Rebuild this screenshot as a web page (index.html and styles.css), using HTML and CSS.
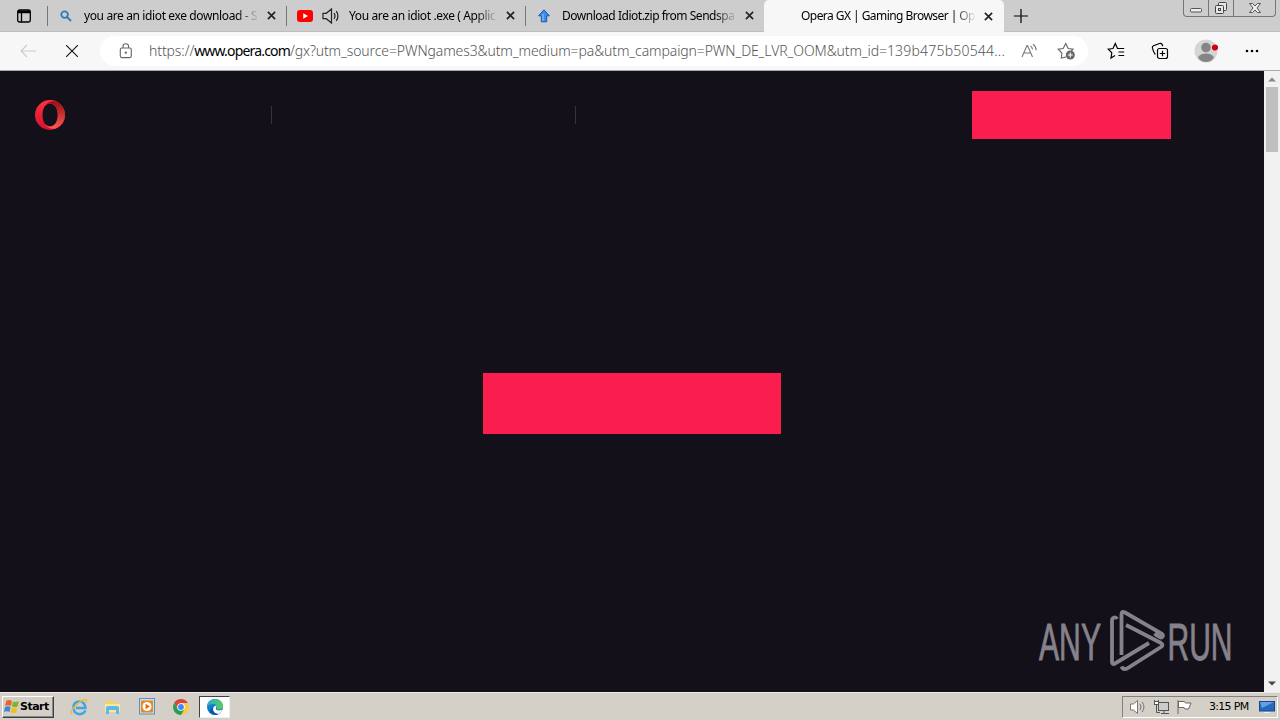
FILE: index.html
```html
<!DOCTYPE html>
<html lang="en">
<head>
  <meta charset="utf-8">
  <title>Opera GX | Gaming Browser | Opera</title>
  <link rel="stylesheet" href="styles.css">
</head>
<body>
<div class="tabs">
  <div class="tab-menu">
    <svg width="16" height="16" viewBox="0 0 16 16" fill="none" stroke="#000" stroke-width="1.3"><rect x="1.7" y="2" width="12.6" height="12" rx="1.8"/><path d="M2 3.2h12M2 4.5h12M5.5 4v10"/></svg>
  </div>
  <div class="tab">
    <svg class="icon" width="12" height="12" viewBox="0 0 12 12" fill="none" stroke="#3679b8" stroke-width="1.8"><circle cx="4.6" cy="4.6" r="3.3"/><path d="M7 7l4 4"/></svg>
    <span class="title t1">you are an idiot exe download - S</span>
    <svg class="close" viewBox="0 0 10 10"><path d="M1 1l8 8M9 1l-8 8"/></svg>
  </div>
  <div class="tab media">
    <svg class="icon" width="16" height="12" viewBox="0 0 16 12"><rect width="16" height="12" rx="3" fill="#f00"/><path d="M6.2 3.2v5.6L11 6z" fill="#fff"/></svg>
    <svg class="sound" width="18" height="16" viewBox="0 0 18 16" fill="none" stroke="#222" stroke-width="1.2"><path d="M1 5.3h3.2L9.5 1v14L4.2 10.7H1zM12 5.2q2 2.8 0 5.6M14.3 3.2q3.3 4.8 0 9.6"/></svg>
    <span class="title t2">You are an idiot .exe ( Applic</span>
    <svg class="close" viewBox="0 0 10 10"><path d="M1 1l8 8M9 1l-8 8"/></svg>
  </div>
  <div class="tab">
    <svg class="icon" width="12" height="14" viewBox="0 0 12 14"><path d="M6 .8l5.400 6H8.700v6H3.300v-6H.6z" fill="#3c8cec" stroke="#1858b0"/><path d="M5 5v7" stroke="#8cc8ff"/></svg>
    <span class="title t3">Download Idiot.zip from Sendspa</span>
    <svg class="close" viewBox="0 0 10 10"><path d="M1 1l8 8M9 1l-8 8"/></svg>
  </div>
  <div class="tab active">
    <span class="icon blank"></span>
    <span class="title t4">Opera GX | Gaming Browser | Op</span>
    <svg class="close" viewBox="0 0 10 10"><path d="M1 1l8 8M9 1l-8 8"/></svg>
  </div>
  <div class="new-tab">
    <svg width="14" height="14" viewBox="0 0 14 14" stroke="#000" stroke-width="1.2"><path d="M7 0v14M0 7h14"/></svg>
  </div>
  <div class="window-buttons">
    <div class="wb"><svg width="14" height="6" viewBox="0 0 14 6"><rect x="1.500" y="1.500" width="11" height="3.500" rx="1" fill="#eee" stroke="#555"/></svg></div>
    <div class="wb"><svg width="14" height="14" viewBox="0 0 14 14" fill="#e6e6e6" stroke="#444"><rect x="4.500" y="1.500" width="8" height="8" rx="1"/><rect x="1.500" y="4.500" width="8" height="8" rx="1"/><rect x="4.500" y="7.500" width="2" height="2"/></svg></div>
    <div class="wb wide"><svg width="14" height="12" viewBox="0 0 14 12"><path d="M1.500 1.500h3L7 4l2.500-2.500h3L9 6l3.500 4.500h-3L7 8l-2.500 2.500h-3L5 6z" fill="#eee" stroke="#555"/></svg></div>
  </div>
</div>

<div class="toolbar">
  <svg class="back" width="16" height="14" viewBox="0 0 16 14" fill="none" stroke="#ccc" stroke-width="1.2"><path d="M16 7H1M7 1L1 7l6 6"/></svg>
  <svg class="stop" width="12" height="12" viewBox="0 0 12 12" stroke="#111" stroke-width="1.1"><path d="M0 0l12 12M12 0L0 12"/></svg>
  <div class="address">
    <svg class="lock" width="14" height="16" viewBox="0 0 14 16" fill="none" stroke="#666" stroke-width="1.1"><rect x="1.300" y="5" width="11" height="9.600" rx="1.500"/><path d="M4 5V3.500q0-2.800 2.800-2.800t2.800 2.800V5"/><circle cx="6.800" cy="9.700" r=".6" fill="#666"/></svg>
    <div class="url"><span class="scheme">https://</span><span class="host">www.opera.com</span><span class="path">/gx?utm_source=PWNgames3&amp;utm_medium=pa&amp;utm_campaign=PWN_DE_LVR_OOM&amp;utm_id=</span><span class="id">139b475b50544...</span></div>
    <svg class="read" width="17" height="16" viewBox="0 0 17 16" fill="none" stroke="#777" stroke-width="1.1"><path d="M1 14L6 2.500h.5L11.500 14M2.800 10h7M9.500 3q2 1.200 2 3.500M12 1.300q3 2 3.200 6"/></svg>
    <svg class="fav" width="18" height="18" viewBox="0 0 18 18" fill="none" stroke="#666" stroke-width="1.1"><path d="M9 15l-4.700 1 .6-5L1.200 7.200l5-.7L8.700 1.500l2.500 5 5 .7-2 2"/><circle cx="13.300" cy="13" r="4.500" fill="#666" stroke="none"/><path d="M13.300 10.500v5M10.800 13h5" stroke="#fff"/></svg>
  </div>
  <svg class="favorites" width="18" height="18" viewBox="0 0 18 18" fill="none" stroke="#000" stroke-width="1.2"><path d="M8 13.500L4 16l.8-5.200L1.200 7.200l4.800-.7 2.300-5 2.200 5h6.700M11.500 10h5.700M11.500 13.500h5.700"/></svg>
  <svg class="collections" width="18" height="18" viewBox="0 0 18 18" fill="none" stroke="#000" stroke-width="1.2"><rect x="6.500" y="6.500" width="10" height="10" rx="2"/><path d="M11.500 8.800v5.400M8.800 11.500h5.400M4.300 12.500Q2.800 11 1.400 6.200 1 4.500 2.500 3.800L8.500 1.500q1.800-.5 2.700 1l.6 1.700"/></svg>
  <svg class="profile" width="24" height="24" viewBox="0 0 24 24"><circle cx="12" cy="12" r="11.500" fill="#d5d5d3"/><circle cx="12" cy="8.500" r="4.800" fill="#858585"/><path d="M4 18.500q2-4 8-4t8 4q-3 4.500-8 4.500t-8-4.500" fill="#858585"/><circle cx="21" cy="8.500" r="3.100" fill="#d40010"/></svg>
  <svg class="more" width="14" height="4" viewBox="0 0 14 4"><circle cx="2" cy="2" r="1.300"/><circle cx="7" cy="2" r="1.300"/><circle cx="12" cy="2" r="1.300"/></svg>
</div>

<div class="viewport">
  <main class="page">
    <header class="site-header">
      <svg class="opera" width="30" height="30" viewBox="0 0 30 30">
        <defs>
          <linearGradient id="ring" x1="0" y1="0" x2="0" y2="1"><stop offset="0" stop-color="#ff3040"/><stop offset="1" stop-color="#d8102c"/></linearGradient>
          <linearGradient id="fold" x1="0" y1="0" x2="0" y2="1"><stop offset="0" stop-color="#980c12"/><stop offset="1" stop-color="#ff5a55"/></linearGradient>
        </defs>
        <path d="M15 0a15 15 0 100 30 15 15 0 000-30m0 3.500c4.700 0 7.800 5 7.800 11.500S19.700 26.500 15 26.500 7.500 21.500 7.500 15 10.300 3.500 15 3.500" fill="url(#ring)"/>
        <path d="M10 5.500Q15 0 20.500 1.500 30 5.500 30 15T20.500 28.500Q15 30 10 24.500q3 2 5 2c4.700 0 7.800-5 7.800-11.500S19.700 3.500 15 3.500q-3 0-5 2" fill="url(#fold)"/>
      </svg>
      <span class="sep"></span>
      <span class="sep"></span>
      <a class="download"></a>
    </header>
    <a class="cta"></a>
    <svg class="watermark" width="204" height="68" viewBox="0 0 204 68">
      <g class="brand"><text x="2" y="50.500" textLength="62" lengthAdjust="spacingAndGlyphs">ANY</text><text x="130.500" y="50.500" textLength="65" lengthAdjust="spacingAndGlyphs">RUN</text></g>
      <g class="play"><path d="M80 10q-1-2-3-1.500-2 .5-2 3V53q0 3 3 1.500L112 34"/><path d="M84.500 46V5.500q0-4 3.500-2l36.500 21q3 2.500 0 4-2 0-7-4"/><path d="M89 16l35 18q3 2 0 4L90 59.500q-4 1.500-5.500-2"/></g>
    </svg>
  </main>
  <div class="scrollbar">
    <svg width="8" height="5" viewBox="0 0 8 5"><path d="M0 4.500L4 .5l4 4z" fill="#888"/></svg>
    <span class="thumb"></span>
    <svg class="down" width="8" height="5" viewBox="0 0 8 5"><path d="M0 .5h8l-4 4z" fill="#444"/></svg>
  </div>
</div>

<div class="taskbar">
  <div class="start">
    <svg width="16" height="15" viewBox="0 0 16 15"><path d="M2.500 1.500q3-1 5.500.5L7 7Q4 5.500 1 7z" fill="#ee6227"/><path d="M9 2.500q3 1 6-.5l-1.500 5.500Q11 9 8 7.500z" fill="#78b82a"/><path d="M1 8q3-1.500 5.500 0L5.500 13Q3 11.500 0 13z" fill="#3c88d8"/><path d="M7.800 8.500q3 1.500 5.700 0L12 13.700q-3 1-5.500-.5z" fill="#f7bd20"/></svg>
    <span>Start</span>
  </div>
  <div class="task"><svg width="18" height="18" viewBox="0 0 18 18" fill="none"><path d="M15.500 12.500Q13 17 8.500 16 3.500 15 3.500 9.500T9 3.500t6.500 6.500H6" stroke="#42a5e2" stroke-width="2.4"/><path d="M2 15.500Q.5 17 1.500 12M3 11Q9 3 15 1.500q2.500 0 1 3.500" stroke="#eabf3c" stroke-width="1.5"/></svg></div>
  <div class="task"><svg width="17" height="16" viewBox="0 0 17 16"><path d="M2 1h5l1 2h6v8H2z" fill="#efd36f"/><path d="M1 5h15v8H1z" fill="#f7e8a4"/><path d="M2 15V9q0-2 2-2h9q2 0 2 2v6h-3v-4H5v4z" fill="#62b9df"/></svg></div>
  <div class="task"><svg width="18" height="17" viewBox="0 0 18 17"><rect x="1.500" y=".5" width="15" height="15.500" fill="#c3dff2" stroke="#5794bd"/><rect x="3" y="2.500" width="12" height="12" rx="1" fill="#f08518"/><circle cx="9" cy="8.500" r="4.500" fill="#fff"/><path d="M7.500 5.800v5.400L12 8.500z" fill="#e96b0d"/></svg></div>
  <div class="task"><svg width="16" height="16" viewBox="0 0 16 16"><path d="M1.100 4A8 8 0 0114.900 4H8L5 10z" fill="#dc4437"/><path d="M14.900 4A8 8 0 018 16l4-7-1-5z" fill="#fccb3c"/><path d="M8 16A8 8 0 011.100 4L5 10l6 1z" fill="#2a9d58"/><circle cx="8" cy="8" r="3.800" fill="#fff"/><circle cx="8" cy="8" r="2.900" fill="#4285f4"/></svg></div>
  <div class="task current"><svg width="16" height="16" viewBox="0 0 16 16"><defs><linearGradient id="wave" x1="0" y1="0" x2="1" y2=".2"><stop offset="0" stop-color="#25a9e0"/><stop offset="1" stop-color="#5acb57"/></linearGradient></defs><circle cx="8" cy="8" r="8" fill="#137fc9"/><path d="M0 8C0 3 4 0 8 0q7 0 8 7-.5 4-5 3.500-2-.5-1-2Q10 5 6.500 5 2 5 0 8" fill="url(#wave)"/><path d="M9 8.500q-1 2.500 2.500 3 2.500 0 4-1-1 3-4 4.500Q6.500 14.500 6 10.500 6 7.500 9 6.500q1 1 0 2" fill="#fff"/><path d="M6 8.500Q5 14 11.500 15.200 7 17 3.500 14 1 11 6 8.500" fill="#0b58a5"/></svg></div>
  <div class="tray">
    <svg width="18" height="16" viewBox="0 0 18 16" fill="#fff" stroke="#777"><path d="M1.500 5h3L8.500 1.500v13L4.500 11h-3z"/><path d="M11 5q2 3 0 6M13.200 3q3.500 5 0 10" fill="none"/></svg>
    <svg width="17" height="16" viewBox="0 0 17 16" fill="#fff" stroke="#555"><rect x="5.500" y="3.500" width="10" height="8" fill="#ccc"/><path d="M8 14.500h8M11 12v2M1.500 1v4h4V1M3.500 5v8.500H7" fill="none"/><rect x="1.500" y="2.500" width="4" height="3"/></svg>
    <svg width="17" height="16" viewBox="0 0 17 16" fill="#fff" stroke="#666"><path d="M2 1v14"/><path d="M2.500 2.500h6l1 1.500h5.500l-2.500 6H9L8 8.500H2.500z"/></svg>
    <span class="clock">3:15 PM</span>
    <svg class="desktop" width="16" height="14" viewBox="0 0 16 14"><rect x=".5" y="1.500" width="15" height="9.500" fill="#2469be" stroke="#164a8a"/><path d="M1 2h14L3 8z" fill="#639fe4"/><path d="M5 12.500h6" stroke="#eee"/></svg>
  </div>
</div>
</body>
</html>
```
FILE: styles.css
```css
* {
  box-sizing: border-box;
}

body {
  margin: 0;
  width: 1280px;
  height: 720px;
  overflow: hidden;
  display: flex;
  flex-direction: column;
  font-family: "Noto Sans", sans-serif;
  color: #000;
}

svg {
  display: block;
  flex-shrink: 0;
}

/* tab strip */
.tabs {
  display: flex;
  height: 32px;
  background: #cdcdcd;
  border-bottom: 1px solid #bdbdbd;
}

.tab-menu {
  width: 47px;
  padding: 8px 0 0 16px;
}

.tab {
  width: 239px;
  display: flex;
  align-items: center;
  padding-left: 12px;
  background: linear-gradient(#777, #777) 0 6px / 1px 20px no-repeat;
}

.tab .icon {
  margin: 0 12px 0 1px;
}

.tab .icon.blank {
  width: 12px;
}

.tab .title {
  width: 175px;
  height: 20px;
  white-space: nowrap;
  font-size: 12px;
  line-height: 20px;
  -webkit-mask-image: linear-gradient(90deg, #000 calc(100% - 22px), transparent);
  mask-image: linear-gradient(90deg, #000 calc(100% - 22px), transparent);
}

.tab .close {
  width: 9px;
  height: 9px;
  margin-left: 8px;
  stroke: #222;
  stroke-width: 1.8;
}

.tab.media {
  padding-left: 11px;
}

.tab.media .icon {
  margin-left: 0;
  margin-right: 9px;
}

.tab.media .sound {
  margin-right: 9px;
}

.tab.media .title {
  width: 149px;
}

.tab.active {
  width: 240px;
  height: 32px;
  background: #f7f7f7;
  border-radius: 5px 5px 0 0;
}

.t1 { letter-spacing: -0.38px; }
.t2 { letter-spacing: -0.38px; }
.t3 { letter-spacing: -0.48px; }
.t4 { letter-spacing: -0.55px; }

.new-tab {
  width: 179px;
  padding: 9px 0 0 10px;
}

.window-buttons {
  display: flex;
  width: 93px;
  height: 17px;
  border: 1px solid #777;
  border-top: 0;
  border-radius: 0 0 4px 4px;
}

.wb {
  width: 25px;
  display: flex;
  justify-content: center;
  align-items: center;
  border-right: 1px solid #777;
}

.wb:first-child {
  padding-top: 4px;
}

.wb.wide {
  flex: 1;
  border-right: 0;
}

/* toolbar */
.toolbar {
  display: flex;
  align-items: center;
  height: 39px;
  background: #f7f7f7;
  border-bottom: 1px solid #aaa;
}

.back {
  margin-left: 20px;
}

.stop {
  margin-left: 30px;
}

.address {
  display: flex;
  align-items: center;
  width: 988px;
  height: 30px;
  margin-left: 22px;
  padding-left: 19px;
  background: #fff;
  border-radius: 15px;
}

.url {
  display: flex;
  width: 858px;
  height: 22px;
  margin-left: 16px;
  font-size: 14px;
  font-weight: 300;
  line-height: 22px;
  white-space: nowrap;
  color: #555;
}

.scheme {
  letter-spacing: -0.1px;
}

.host {
  color: #000;
  font-weight: 400;
  letter-spacing: -0.83px;
}

.path {
  letter-spacing: -0.11px;
}

.id {
  letter-spacing: 0.2px;
}

.read {
  margin-left: 14px;
}

.fav {
  margin-left: 19px;
}

.favorites {
  margin-left: 19px;
}

.collections {
  margin-left: 26px;
}

.profile {
  margin-left: 25px;
}

.more {
  margin-left: 27px;
}

/* page */
.viewport {
  display: flex;
  height: 621px;
}

.page {
  position: relative;
  width: 1264px;
  background: #14101a;
}

.site-header {
  display: flex;
  align-items: center;
  height: 88px;
  padding-left: 35px;
}

.sep {
  width: 1px;
  height: 18px;
  margin-left: 206px;
  background: #37333c;
}

.sep + .sep {
  margin-left: 303px;
}

.download {
  width: 199px;
  height: 48px;
  margin-left: 396px;
  background: #fa1e4e;
}

.cta {
  display: block;
  width: 298px;
  height: 61px;
  margin: 214px auto 0 483px;
  background: #fa1e4e;
}

.watermark {
  position: absolute;
  left: 1037px;
  top: 538px;
}

.brand {
  font-family: "Liberation Sans", sans-serif;
  font-size: 52px;
  fill: #85828b;
  stroke: #85828b;
  stroke-width: 0.9;
}

.play {
  fill: none;
  stroke: #85828b;
  stroke-width: 3.8;
}

.scrollbar {
  display: flex;
  flex-direction: column;
  align-items: center;
  width: 16px;
  padding: 6px 0 6px;
  background: #f1f1f1;
}

.thumb {
  width: 12px;
  height: 65px;
  margin-top: 5px;
  background: #bfbfbf;
}

.down {
  margin-top: auto;
}

/* taskbar */
.taskbar {
  display: flex;
  align-items: center;
  height: 28px;
  padding: 0 2px;
  background: #d4d0c8;
  border-top: 1px solid #eceae5;
}

.start {
  display: flex;
  align-items: center;
  width: 52px;
  height: 22px;
  padding-left: 1px;
  border: 1px solid;
  border-color: #fff #404040 #404040 #fff;
  box-shadow: inset -1px -1px #888;
  font: bold 11px "DejaVu Sans", sans-serif;
  letter-spacing: -0.5px;
}

.task {
  display: flex;
  justify-content: center;
  align-items: center;
  width: 31px;
  height: 22px;
  margin-left: 3px;
}

.start + .task {
  margin-left: 9px;
}

.task.current {
  background: #fff;
  border: 1px solid;
  border-color: #404040 #eee #eee #404040;
}

.tray {
  display: flex;
  align-items: center;
  gap: 6px;
  width: 156px;
  height: 22px;
  margin-left: auto;
  padding-left: 6px;
  border: 1px solid;
  border-color: #808080 #fff #fff #808080;
}

.clock {
  width: 43px;
  margin-left: 10px;
  font: 11px "DejaVu Sans", sans-serif;
  letter-spacing: -0.7px;
  white-space: nowrap;
}

.desktop {
  margin-left: 1px;
}
```
